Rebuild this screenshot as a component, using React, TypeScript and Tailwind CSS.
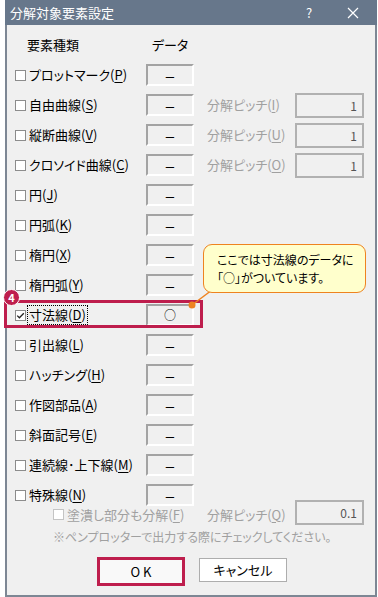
import React from 'react';

interface ElementRow {
  label: string;
  accel: string;
  pitch?: string;
  pitchValue?: string;
  checked?: boolean;
  data?: string;
}

const ROWS: ElementRow[] = [
  { label: 'プロットマーク', accel: 'P' },
  { label: '自由曲線', accel: 'S', pitch: 'I', pitchValue: '1' },
  { label: '縦断曲線', accel: 'V', pitch: 'U', pitchValue: '1' },
  { label: 'クロソイド曲線', accel: 'C', pitch: 'O', pitchValue: '1' },
  { label: '円', accel: 'J' },
  { label: '円弧', accel: 'K' },
  { label: '楕円', accel: 'X' },
  { label: '楕円弧', accel: 'Y' },
  { label: '寸法線', accel: 'D', checked: true, data: '○' },
  { label: '引出線', accel: 'L' },
  { label: 'ハッチング', accel: 'H' },
  { label: '作図部品', accel: 'A' },
  { label: '斜面記号', accel: 'E' },
  { label: '連続線･上下線', accel: 'M' },
  { label: '特殊線', accel: 'N' },
];

const FONT = "font-['Noto_Sans_CJK_JP','Noto_Sans',sans-serif] [font-feature-settings:'palt']";

function CheckBox({ checked, disabled }: { checked?: boolean; disabled?: boolean }) {
  return (
    <span
      className={`flex h-[11px] w-[11px] shrink-0 items-center justify-center border bg-white ${
        disabled ? 'border-[#c4c4c4]' : 'border-[#8c8c8c]'
      }`}
    >
      {checked && (
        <svg width="9" height="9" viewBox="0 0 9 9">
          <path d="M1.2 4.6 L3.4 6.8 L7.8 2.2" fill="none" stroke="#222" strokeWidth="1.3" />
        </svg>
      )}
    </span>
  );
}

function DataBox({ value }: { value?: string }) {
  return (
    <div className="flex h-[22px] w-[48px] items-center justify-center border-2 border-t-[#a3a3a3] border-l-[#a3a3a3] border-r-white border-b-white text-black">
      {value ? (
        <span className="text-[12px]">{value}</span>
      ) : (
        <span className="font-['Liberation_Sans',sans-serif] text-[15px] leading-none">–</span>
      )}
    </div>
  );
}

function PitchBox({ value }: { value: string }) {
  return (
    <div className="flex h-[25px] w-[69px] items-start justify-end border-2 border-[#b1b1b1] bg-[#f0f0f0] pr-[5px] pt-[2px] text-[12px] text-[#555]">
      {value}
    </div>
  );
}

function Label({ text, accel, focused }: { text: string; accel: string; focused?: boolean }) {
  return (
    <span className={`text-[13px] leading-[18px] text-black ${focused ? 'border border-dotted border-black px-[1px]' : ''}`}>
      {text}(<span className="underline underline-offset-2">{accel}</span>)
    </span>
  );
}

export default function App() {
  return (
    <div className={`relative h-[597px] w-[378px] overflow-hidden bg-white ${FONT}`}>
      <div className="ml-[5px] flex h-[597px] w-[372px] flex-col">
        {/* title bar */}
        <div className="flex h-[25px] shrink-0 items-center bg-[#67778b] pl-[5px] text-[13px] text-white">
          <span className="flex-1">分解対象要素設定</span>
          <span className="w-[40px] text-center text-[13px]">?</span>
          <span className="flex w-[48px] justify-center">
            <svg width="12" height="12" viewBox="0 0 12 12">
              <path d="M1 1 L11 11 M11 1 L1 11" stroke="white" strokeWidth="1.2" />
            </svg>
          </span>
        </div>

        <div className="flex flex-1 flex-col border-x-2 border-b-2 border-[#7d8794] bg-[#f0f0f0] pt-[10px]">
          {/* header */}
          <div className="mb-[5px] flex h-[20px] items-center text-[13px] text-black">
            <span className="w-[139px] pl-[20px]">要素種類</span>
            <span className="w-[48px] text-center">データ</span>
          </div>

          {ROWS.map((row) => (
            <div key={row.accel} className="flex h-[30px] items-center">
              <div className={`flex w-[139px] items-center pl-[8px] ${row.checked ? 'gap-[1px]' : 'gap-[3px]'}`}>
                <CheckBox checked={row.checked} />
                <Label text={row.label} accel={row.accel} focused={row.checked} />
              </div>
              <DataBox value={row.data} />
              {row.pitch && (
                <>
                  <span className="ml-[13px] w-[88px] text-[13px] text-[#a0a0a0]">
                    分解ピッチ(<span className="underline underline-offset-2">{row.pitch}</span>)
                  </span>
                  <PitchBox value={row.pitchValue ?? ''} />
                </>
              )}
            </div>
          ))}

          {/* fill option */}
          <div className="mt-[-10px] flex h-[25px] items-center">
            <div className="flex w-[200px] items-center gap-[3px] pl-[46px] pt-[4px]">
              <CheckBox disabled />
              <span className="text-[13px] text-[#a0a0a0]">
                塗潰し部分も分解(<span className="underline underline-offset-2">F</span>)
              </span>
            </div>
            <span className="w-[88px] pt-[4px] text-[13px] text-[#a0a0a0]">
              分解ピッチ(<span className="underline underline-offset-2">Q</span>)
            </span>
            <PitchBox value="0.1" />
          </div>

          <div className="mt-[3px] h-[18px] pl-[46px] text-[12px] leading-[18px] text-[#a0a0a0]">
            ※ペンプロッターで出力する際にチェックしてください。
          </div>

          <div className="mt-[11px] flex gap-[14px] pl-[90px]">
            <button className="h-[29px] w-[88px] border-[3px] border-[#be1e4d] bg-[#f9f9f9] text-[13px] text-black">
              O K
            </button>
            <button className="mt-[1px] h-[24px] w-[88px] border border-[#adadad] bg-white text-[13px] text-black">
              キャンセル
            </button>
          </div>
        </div>
      </div>

      {/* highlight overlay */}
      <div className="absolute left-[4px] top-[300px] h-[28px] w-[199px] border-[3px] border-[#be1e4d]" />
      <div className="absolute left-[3px] top-[289px] flex h-[17px] w-[17px] items-center justify-center rounded-full border-[1.5px] border-white bg-[#be1e4d] text-[11px] font-bold leading-none text-white">
        4
      </div>

      {/* callout */}
      <svg className="absolute left-0 top-0" width="378" height="597">
        <line x1="192" y1="305" x2="212" y2="290" stroke="#ee8320" strokeWidth="1.5" />
        <circle cx="192" cy="305" r="3.5" fill="#ee8320" />
      </svg>
      <div className="absolute left-[203px] top-[244px] h-[49px] w-[163px] rounded-[9px] border border-[#ee8320] bg-[#ffffcc] pl-[13px] pt-[6px] text-[12px] leading-[18px] text-black">
        <div>ここでは寸法線のデータに</div>
        <div>「○」がついています。</div>
      </div>
    </div>
  );
}
